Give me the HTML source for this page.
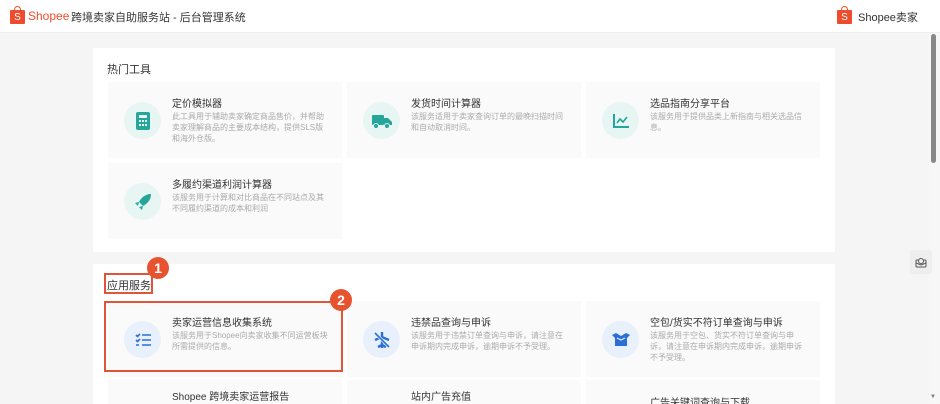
<!DOCTYPE html>
<html><head><meta charset="utf-8"><style>
*{margin:0;padding:0;box-sizing:border-box}
html{overflow:hidden;height:404px}
body{width:940px;height:404px;overflow:hidden;background:#f5f5f5;font-family:"Liberation Sans","Noto Sans CJK SC",sans-serif;position:relative}
.hdr{position:absolute;left:0;top:0;width:940px;height:33px;background:#fff;border-bottom:1px solid #eee}
.bag{position:absolute;width:15px;height:14px;background:#ee4d2d;border-radius:1px;color:#fff;font-size:10px;text-align:center;line-height:15px}
.bag:before{content:"";position:absolute;left:4px;top:-4px;width:5px;height:5px;border:1.5px solid #ee4d2d;border-bottom:none;border-radius:4px 4px 0 0}
.panel{position:absolute;left:93px;width:742px;background:#fff}
.sec{position:absolute;font-size:11px;color:#333}
.card{position:absolute;width:234px;height:76px;background:#fafafa}
.ic{position:absolute;left:16px;top:20px;width:37px;height:37px;border-radius:50%;background:#e8f6f3;display:flex;align-items:center;justify-content:center}
.ic.b{background:#e8f0fb}
.t{position:absolute;left:64px;top:13px;font-size:10px;color:#333;white-space:nowrap}
.d{position:absolute;left:64px;top:29px;width:158px;font-size:8px;line-height:11px;color:#aaa}
.badge{position:absolute;width:22px;height:22px;border-radius:50%;background:#e8532f;color:#fff;font-weight:bold;font-size:14px;text-align:center;line-height:22px}
.rb{position:absolute;border:2px solid #e0553a}
</style></head><body>
<div class="hdr">
<div class="bag" style="left:10px;top:10px">S</div>
<div style="position:absolute;left:28px;top:9px;font-size:12px;color:#ee4d2d">Shopee</div>
<div style="position:absolute;left:71px;top:9px;font-size:11px;color:#333">跨境卖家自助服务站 - 后台管理系统</div>
<div class="bag" style="left:837px;top:10px">S</div>
<div style="position:absolute;left:858px;top:9px;font-size:11px;color:#333">Shopee卖家</div>
</div>
<div style="position:absolute;left:929px;top:33px;width:11px;height:371px;background:#f7f7f7"></div>
<div style="position:absolute;left:931px;top:34px;width:5px;height:129px;background:#888;border-radius:3px"></div>
<div style="position:absolute;left:930px;top:394px;font-size:6px;color:#777">▼</div>

<div class="panel" style="top:48px;height:204px">
<div class="sec" style="left:14px;top:13px">热门工具</div>
</div>
<div class="card" style="left:108px;top:82px"><div class="ic"><svg width="14" height="18"><rect x="0" y="0" width="14" height="18" rx="2" fill="#26a69a"/><rect x="3" y="3" width="8" height="3" fill="#e8f6f3"/><g fill="#e8f6f3"><rect x="3" y="8" width="2" height="2"/><rect x="6" y="8" width="2" height="2"/><rect x="9" y="8" width="2" height="2"/><rect x="3" y="12" width="2" height="2"/><rect x="6" y="12" width="2" height="2"/><rect x="9" y="12" width="2" height="2"/></g></svg></div><div class="t">定价模拟器</div><div class="d">此工具用于辅助卖家确定商品售价，并帮助卖家理解商品的主要成本结构，提供SLS版和海外仓版。</div></div>
<div class="card" style="left:347px;top:82px;"><div class="ic"><svg width="20" height="16"><rect x="0" y="2" width="12" height="10" rx="1" fill="#26a69a"/><path d="M12 5h4l4 4v3h-8z" fill="#26a69a"/><circle cx="4" cy="13" r="2.5" fill="#26a69a" stroke="#e8f6f3"/><circle cx="15" cy="13" r="2.5" fill="#26a69a" stroke="#e8f6f3"/></svg></div><div class="t">发货时间计算器</div><div class="d">该服务适用于卖家查询订单的最晚扫描时间和自动取消时间。</div></div>
<div class="card" style="left:586px;top:82px"><div class="ic"><svg width="18" height="16"><path d="M2 1v13h15" stroke="#26a69a" stroke-width="2" fill="none"/><path d="M5 10l3-4 3 3 4-5" stroke="#26a69a" stroke-width="1.6" fill="none"/></svg></div><div class="t">选品指南分享平台</div><div class="d">该服务用于提供品类上新指南与相关选品信息。</div></div>
<div class="card" style="left:108px;top:163px"><div class="ic"><svg width="18" height="18"><path d="M17 1c-6 0-10 4-12 8l4 4c4-2 8-6 8-12z" fill="#26a69a"/><path d="M5 9l-4 1 3 3zM9 13l-1 4-3-3z" fill="#26a69a"/></svg></div><div class="t">多履约渠道利润计算器</div><div class="d">该服务用于计算和对比商品在不同站点及其不同履约渠道的成本和利润</div></div>

<div class="panel" style="top:264px;height:140px"></div>
<div class="sec" style="left:107px;top:277px">应用服务</div>
<div class="rb" style="left:104px;top:273px;width:49px;height:21px"></div>
<div class="badge" style="left:147px;top:257px">1</div>
<div class="card" style="left:108px;top:301px"><div class="ic b"><svg width="16" height="14"><g stroke="#2b6fd6" stroke-width="1.6" fill="none"><path d="M1 2l1.5 1.5L5 1M1 7l1.5 1.5L5 6M1 12h3M7 2h9M7 7h9M7 12h9"/></g></svg></div><div class="t">卖家运营信息收集系统</div><div class="d">该服务用于Shopee向卖家收集不同运营板块所需提供的信息。</div></div>
<div class="card" style="left:347px;top:301px"><div class="ic b"><svg width="18" height="18"><path d="M9 1v16M2 9l7-3 7 3M5 16l4-2 4 2" stroke="#2b6fd6" stroke-width="2.4" fill="none"/><path d="M2 2l14 14" stroke="#e8f0fb" stroke-width="3"/><path d="M2 2l14 14" stroke="#2b6fd6" stroke-width="1.6"/></svg></div><div class="t">违禁品查询与申诉</div><div class="d">该服务用于违禁订单查询与申诉，请注意在申诉期内完成申诉，逾期申诉不予受理。</div></div>
<div class="card" style="left:586px;top:301px"><div class="ic b"><svg width="18" height="14"><path d="M0 2l4-2 5 3 5-3 4 2-3 3v8H3V5z" fill="#2b6fd6"/><path d="M5 5l4 2 4-2" stroke="#e8f0fb" stroke-width="1.2" fill="none"/></svg></div><div class="t">空包/货实不符订单查询与申诉</div><div class="d">该服务用于空包、货实不符订单查询与申诉，请注意在申诉期内完成申诉，逾期申诉不予受理。</div></div>
<div class="rb" style="left:104px;top:301px;width:239px;height:71px"></div>
<div class="badge" style="left:330px;top:289px">2</div>
<div class="card" style="left:108px;top:380px;height:24px"><div class="t" style="top:8px">Shopee 跨境卖家运营报告</div></div>
<div class="card" style="left:347px;top:380px;height:24px"><div class="t" style="top:8px">站内广告充值</div></div>
<div class="card" style="left:586px;top:380px;height:24px"><div class="t" style="top:14px">广告关键词查询与下载</div></div>

<div style="position:absolute;left:910px;top:250px;width:22px;height:24px;background:#eee;border-radius:3px;display:flex;align-items:center;justify-content:center"><svg width="12" height="11"><rect x="1" y="3" width="10" height="7" rx="1" stroke="#555" fill="none"/><circle cx="6" cy="4" r="2.5" stroke="#555" fill="#eee"/><path d="M1 6l5 2 5-2" stroke="#555" fill="none"/></svg></div>
</body></html>
